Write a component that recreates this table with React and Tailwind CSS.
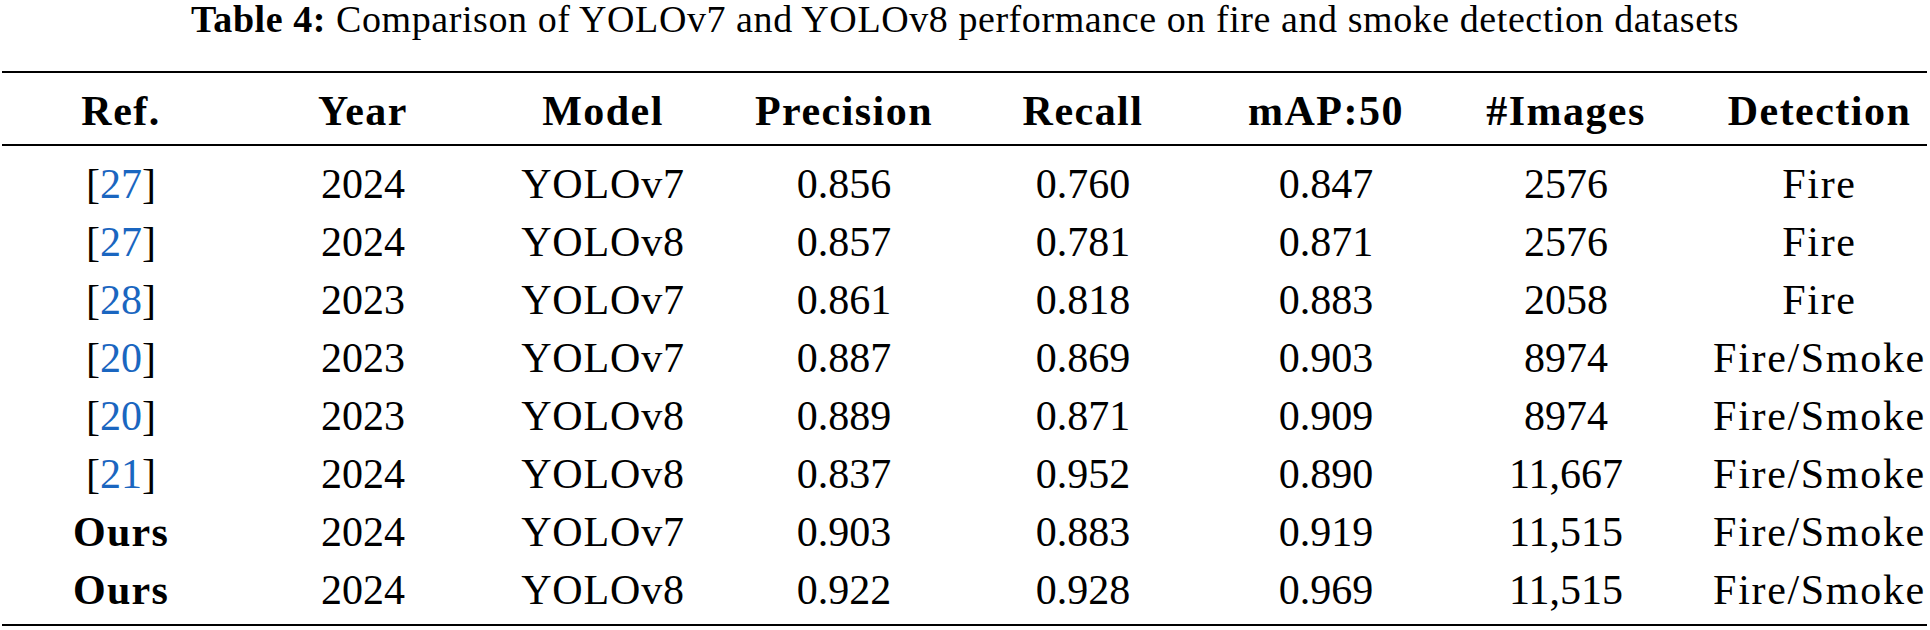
import React from "react";

const rows = [
  ["27", "2024", "YOLOv7", "0.856", "0.760", "0.847", "2576", "Fire"],
  ["27", "2024", "YOLOv8", "0.857", "0.781", "0.871", "2576", "Fire"],
  ["28", "2023", "YOLOv7", "0.861", "0.818", "0.883", "2058", "Fire"],
  ["20", "2023", "YOLOv7", "0.887", "0.869", "0.903", "8974", "Fire/Smoke"],
  ["20", "2023", "YOLOv8", "0.889", "0.871", "0.909", "8974", "Fire/Smoke"],
  ["21", "2024", "YOLOv8", "0.837", "0.952", "0.890", "11,667", "Fire/Smoke"],
  ["Ours", "2024", "YOLOv7", "0.903", "0.883", "0.919", "11,515", "Fire/Smoke"],
  ["Ours", "2024", "YOLOv8", "0.922", "0.928", "0.969", "11,515", "Fire/Smoke"],
];

const headers = ["Ref.", "Year", "Model", "Precision", "Recall", "mAP:50", "#Images", "Detection"];

const gridCols = "grid grid-cols-[272px_178px_302px_180px_298px_188px_292px_215px]";

export default function App() {
  return (
    <div className="w-[1930px] h-[630px] bg-white text-black font-['Liberation_Serif',serif]">
      <div className="h-[71px]">
        <p className="text-center text-[38px] leading-[38px] tracking-[0.015em]">
          <span className="font-bold">Table 4:</span> Comparison of YOLOv7 and YOLOv8 performance on fire and smoke detection datasets
        </p>
      </div>
      <div className="ml-[2px] w-[1925px] border-t-2 border-b-2 border-black pb-[5px]">
        <div className={`${gridCols} h-[73px] pt-[4px] items-center border-b-2 border-black text-[42px] leading-[58px] font-bold tracking-[0.035em]`}>
          {headers.map((h, i) => (
            <div key={h} className={i === 0 ? "text-center whitespace-nowrap pr-[34px]" : "text-center whitespace-nowrap"}>{h}</div>
          ))}
        </div>
        <div className="pt-[9px]">
          {rows.map((r, i) => (
            <div key={i} className={`${gridCols} h-[58px] items-center text-[42px] leading-[58px]`}>
              <div className="text-center pr-[34px]">
                {r[0] === "Ours" ? (
                  <span className="font-bold tracking-[0.03em]">Ours</span>
                ) : (
                  <span>
                    [<span className="text-[#1a66c0]">{r[0]}</span>]
                  </span>
                )}
              </div>
              <div className="text-center">{r[1]}</div>
              <div className="text-center tracking-[0.02em]">{r[2]}</div>
              <div className="text-center">{r[3]}</div>
              <div className="text-center">{r[4]}</div>
              <div className="text-center">{r[5]}</div>
              <div className="text-center">{r[6]}</div>
              <div className="text-center whitespace-nowrap tracking-[0.04em]">{r[7]}</div>
            </div>
          ))}
        </div>
      </div>
    </div>
  );
}
